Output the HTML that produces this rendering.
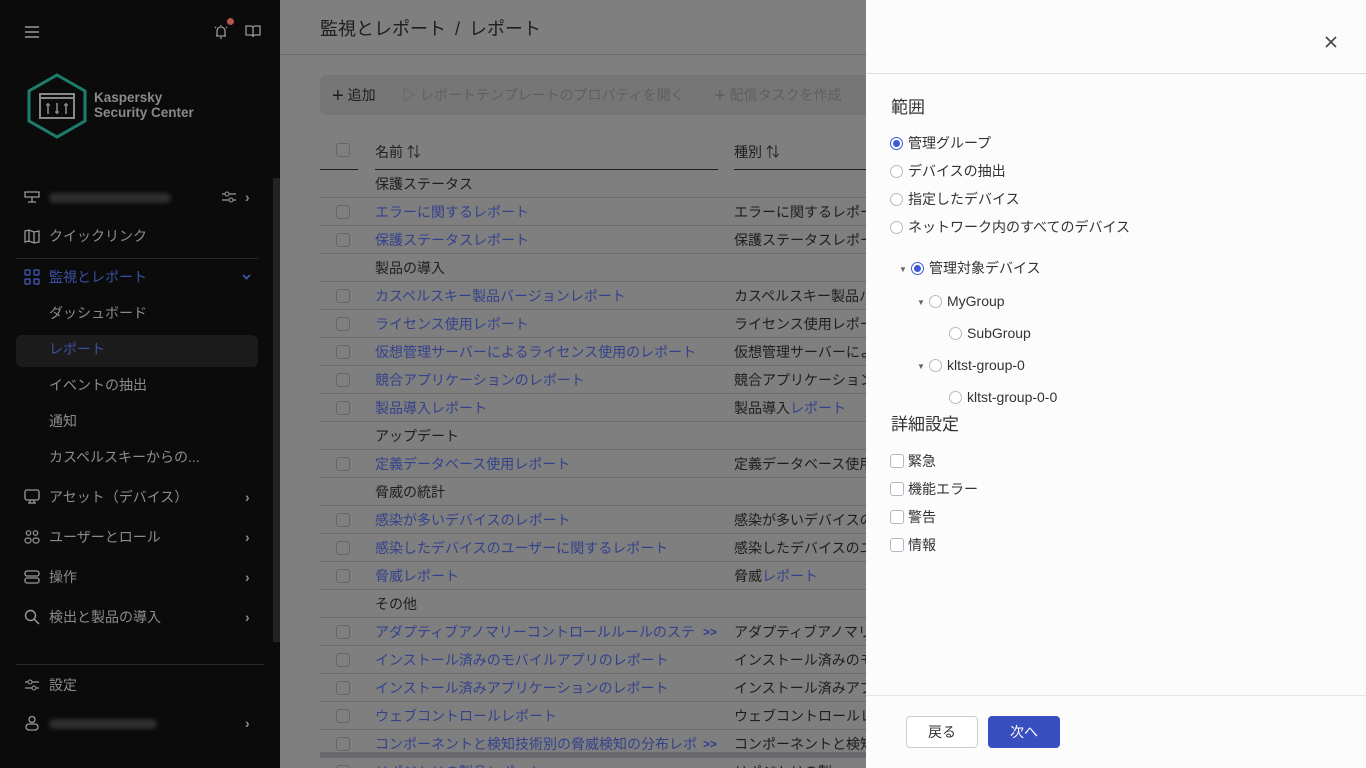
<!DOCTYPE html>
<html><head><meta charset="utf-8"><style>
*{margin:0;padding:0;box-sizing:border-box}
body{width:1366px;height:768px;overflow:hidden;position:relative;font-family:"Liberation Sans","Noto Sans CJK JP",sans-serif;background:#7f7f7f}
.sb{position:absolute;left:0;top:0;width:280px;height:768px;background:#0b0b0b;color:#8c8c8c;font-size:14px}
.it{position:absolute;left:0;width:280px;height:20px;line-height:20px}
.it .ic{position:absolute;left:24px;top:2px}
.it .tx{position:absolute;left:49px;top:0;white-space:nowrap}
.it .ch{position:absolute;left:245px;top:0;font-size:14px;color:#8c8c8c;font-weight:bold}
.blur{display:inline-block;height:10px;background:#2e2e2e;border-radius:5px;filter:blur(2px);vertical-align:middle}
.main{position:absolute;left:280px;top:0;width:586px;height:768px;background:#7f7f7f;overflow:hidden}
.row{position:absolute;left:40px;width:560px;height:28px;border-bottom:1px solid #6c6c6c;font-size:14px;line-height:28px;white-space:nowrap}
.row .cb{position:absolute;left:16px;top:7px;width:14px;height:14px;border:1px solid #666;border-radius:3px}
.row .n{position:absolute;left:55px;color:#34428c}
.row .g{position:absolute;left:55px;color:#1e1e1e}
.row .t{position:absolute;left:414px;color:#1e1e1e}
.row .m{position:absolute;left:383px;color:#2f3d8a;font-weight:bold;font-size:12px}
.panel{position:absolute;left:866px;top:0;width:500px;height:768px;background:#fcfcfc;color:#333}
.r{position:absolute;font-size:14px;line-height:18px;white-space:nowrap}
.rad{display:inline-block;width:13px;height:13px;border:1px solid #b8b8c4;border-radius:50%;vertical-align:-2px;margin-right:5px;position:relative;background:#fff}
.rad.on{border-color:#3d5bd6}
.rad.on:after{content:"";position:absolute;left:2px;top:2px;width:7px;height:7px;border-radius:50%;background:#3d5bd6}
.chk{display:inline-block;width:14px;height:14px;border:1px solid #b8b4c8;border-radius:3px;vertical-align:-2px;margin-right:4px;background:#fff}
.tri{display:inline-block;font-size:8px;color:#666;width:12px;vertical-align:1px}
</style></head><body>
<div class="sb">
 <svg style="position:absolute;left:25px;top:26px" width="14" height="12"><path d="M0 1h14M0 6h14M0 11h14" stroke="#999" stroke-width="1.5"/></svg>
 <svg style="position:absolute;left:213px;top:23px" width="16" height="16"><path d="M3 13h10M4 13V8a4 4 0 0 1 8 0v5M8 2v1M2 4l1 1M14 4l-1 1M7 15h2" stroke="#999" stroke-width="1.3" fill="none"/></svg>
 <div style="position:absolute;left:227px;top:18px;width:7px;height:7px;border-radius:50%;background:#b85450"></div>
 <svg style="position:absolute;left:245px;top:25px" width="16" height="13"><path d="M1 1h5a2 2 0 0 1 2 2v9a2 2 0 0 0-2-2H1zM15 1h-5a2 2 0 0 0-2 2v9a2 2 0 0 1 2-2h5z" stroke="#999" stroke-width="1.3" fill="none"/></svg>
 <svg style="position:absolute;left:26px;top:73px" width="62" height="66"><polygon points="31,2 59,18 59,48 31,64 3,48 3,18" fill="none" stroke="#1d7c6b" stroke-width="3"/><rect x="14" y="21" width="34" height="24" fill="none" stroke="#888" stroke-width="2"/><path d="M14 25h34" stroke="#888" stroke-width="2"/><path d="M22 30v11M31 30v11M40 30v11M20 32h4M29 39h4M38 32h4" stroke="#888" stroke-width="1.6"/></svg>
 <div style="position:absolute;left:94px;top:90px;font-size:13.5px;font-weight:bold;color:#8a8a8a;line-height:15px">Kaspersky<br>Security Center</div>
 <div style="position:absolute;left:273px;top:178px;width:7px;height:464px;background:#222"></div>
 <div class="it" style="top:187px"><svg class="ic" width="16" height="16"><path d="M1 3h14v5H1zM8 8v5M4 13h8" stroke="#999" stroke-width="1.3" fill="none"/></svg><span class="tx"><span class="blur" style="width:122px"></span></span><svg style="position:absolute;left:221px;top:3px" width="16" height="14"><path d="M1 4h14M1 10h14" stroke="#999" stroke-width="1.2"/><circle cx="6" cy="4" r="2" fill="#0b0b0b" stroke="#999"/><circle cx="10" cy="10" r="2" fill="#0b0b0b" stroke="#999"/></svg><span class="ch">›</span></div>
 <div class="it" style="top:226px"><svg class="ic" width="16" height="16"><path d="M1 3l4-1 5 2 5-1v11l-5 1-5-2-4 1zM5 2v12M10 4v11" stroke="#999" stroke-width="1.3" fill="none"/></svg><span class="tx">クイックリンク</span></div>
 <div style="position:absolute;left:16px;top:258px;width:242px;height:1px;background:#2a2a2a"></div>
 <div class="it" style="top:267px;color:#3a52a3"><svg class="ic" width="16" height="16"><rect x="1" y="1" width="5" height="5" rx="1" stroke="#3d56a8" fill="none" stroke-width="1.4"/><rect x="10" y="1" width="5" height="5" rx="1" stroke="#3d56a8" fill="none" stroke-width="1.4"/><rect x="1" y="10" width="5" height="5" rx="1" stroke="#3d56a8" fill="none" stroke-width="1.4"/><rect x="10" y="10" width="5" height="5" rx="1" stroke="#3d56a8" fill="none" stroke-width="1.4"/></svg><span class="tx">監視とレポート</span><svg style="position:absolute;left:242px;top:7px" width="9" height="6"><path d="M1 1l3.5 3.5L8 1" stroke="#3d56a8" stroke-width="1.8" fill="none"/></svg></div>
 <div class="it" style="top:303px"><span class="tx">ダッシュボード</span></div>
 <div style="position:absolute;left:16px;top:335px;width:242px;height:32px;background:#1b1b1b;border-radius:6px"></div>
 <div class="it" style="top:339px;color:#3a52a3"><span class="tx">レポート</span></div>
 <div class="it" style="top:375px"><span class="tx">イベントの抽出</span></div>
 <div class="it" style="top:411px"><span class="tx">通知</span></div>
 <div class="it" style="top:447px"><span class="tx">カスペルスキーからの...</span></div>
 <div class="it" style="top:487px"><svg class="ic" width="16" height="16"><rect x="1" y="1" width="14" height="10" rx="2" stroke="#999" fill="none" stroke-width="1.3"/><path d="M6 11v3M10 11v3M4 14h8" stroke="#999" stroke-width="1.3"/></svg><span class="tx">アセット（デバイス）</span><span class="ch">›</span></div>
 <div class="it" style="top:527px"><svg class="ic" width="16" height="16"><circle cx="4.5" cy="4" r="2.2" stroke="#999" fill="none" stroke-width="1.2"/><circle cx="11.5" cy="4" r="2.2" stroke="#999" fill="none" stroke-width="1.2"/><rect x="1" y="9" width="6" height="5" rx="2.5" stroke="#999" fill="none" stroke-width="1.2"/><rect x="9" y="9" width="6" height="5" rx="2.5" stroke="#999" fill="none" stroke-width="1.2"/></svg><span class="tx">ユーザーとロール</span><span class="ch">›</span></div>
 <div class="it" style="top:567px"><svg class="ic" width="16" height="16"><rect x="1" y="2" width="14" height="5" rx="2" stroke="#999" fill="none" stroke-width="1.3"/><rect x="1" y="9" width="14" height="5" rx="2" stroke="#999" fill="none" stroke-width="1.3"/></svg><span class="tx">操作</span><span class="ch">›</span></div>
 <div class="it" style="top:607px"><svg class="ic" width="16" height="16"><circle cx="6.5" cy="6.5" r="5" stroke="#999" fill="none" stroke-width="1.4"/><path d="M10 10l5 5" stroke="#999" stroke-width="1.4"/></svg><span class="tx">検出と製品の導入</span><span class="ch">›</span></div>
 <div style="position:absolute;left:16px;top:664px;width:248px;height:1px;background:#2a2a2a"></div>
 <div class="it" style="top:675px"><svg class="ic" width="16" height="16"><path d="M1 5h14M1 11h14" stroke="#999" stroke-width="1.2"/><circle cx="6" cy="5" r="2" fill="#0b0b0b" stroke="#999"/><circle cx="10" cy="11" r="2" fill="#0b0b0b" stroke="#999"/></svg><span class="tx">設定</span></div>
 <div class="it" style="top:713px"><svg class="ic" width="16" height="16"><circle cx="8" cy="4.5" r="3" stroke="#999" fill="none" stroke-width="1.3"/><rect x="2" y="9" width="12" height="6" rx="3" stroke="#999" fill="none" stroke-width="1.3"/></svg><span class="tx"><span class="blur" style="width:108px"></span></span><span class="ch">›</span></div>
</div>
<div class="main">
 <div style="position:absolute;left:40px;top:15px;font-size:18px;color:#1e1e1e">監視とレポート <b style="font-weight:normal;margin:0 4px">/</b> レポート</div>
 <div style="position:absolute;left:0;top:54px;width:586px;height:1px;background:#6c6c6c"></div>
 <div style="position:absolute;left:40px;top:75px;width:580px;height:40px;background:#767676;border-radius:6px;font-size:14px;line-height:40px;white-space:nowrap">
  <span style="position:absolute;left:12px;color:#1e1e1e"><span style="font-size:20px;vertical-align:-2px">+</span> 追加</span>
  <span style="position:absolute;left:82px;color:#5f5f5f">▷ レポートテンプレートのプロパティを開く</span>
  <span style="position:absolute;left:394px;color:#5f5f5f"><span style="font-size:20px;vertical-align:-2px">+</span> 配信タスクを作成</span>
 </div>
 <div style="position:absolute;left:40px;top:140px;width:560px;height:30px;font-size:14px;color:#1e1e1e">
  <div style="position:absolute;left:16px;top:3px;width:14px;height:14px;border:1px solid #666;border-radius:3px"></div>
  <span style="position:absolute;left:55px;top:2px">名前 ⇅</span>
  <span style="position:absolute;left:414px;top:2px">種別 ⇅</span>
  <div style="position:absolute;left:0;top:29px;width:38px;height:1px;background:#1e1e1e"></div>
  <div style="position:absolute;left:55px;top:29px;width:343px;height:1px;background:#1e1e1e"></div>
  <div style="position:absolute;left:414px;top:29px;width:150px;height:1px;background:#1e1e1e"></div>
 </div>
 <div class="row" style="top:170px"><span class="g">保護ステータス</span></div>
 <div class="row" style="top:198px"><i class="cb"></i><span class="n">エラーに関するレポート</span><span class="t">エラーに関するレポート</span></div>
 <div class="row" style="top:226px"><i class="cb"></i><span class="n">保護ステータスレポート</span><span class="t">保護ステータスレポート</span></div>
 <div class="row" style="top:254px"><span class="g">製品の導入</span></div>
 <div class="row" style="top:282px"><i class="cb"></i><span class="n">カスペルスキー製品バージョンレポート</span><span class="t">カスペルスキー製品バージョン</span></div>
 <div class="row" style="top:310px"><i class="cb"></i><span class="n">ライセンス使用レポート</span><span class="t">ライセンス使用レポート</span></div>
 <div class="row" style="top:338px"><i class="cb"></i><span class="n">仮想管理サーバーによるライセンス使用のレポート</span><span class="t">仮想管理サーバーによる</span></div>
 <div class="row" style="top:366px"><i class="cb"></i><span class="n">競合アプリケーションのレポート</span><span class="t">競合アプリケーションの</span></div>
 <div class="row" style="top:394px"><i class="cb"></i><span class="n">製品導入レポート</span><span class="t">製品導入<span style="color:#34428c">レポート</span></span></div>
 <div class="row" style="top:422px"><span class="g">アップデート</span></div>
 <div class="row" style="top:450px"><i class="cb"></i><span class="n">定義データベース使用レポート</span><span class="t">定義データベース使用レ</span></div>
 <div class="row" style="top:478px"><span class="g">脅威の統計</span></div>
 <div class="row" style="top:506px"><i class="cb"></i><span class="n">感染が多いデバイスのレポート</span><span class="t">感染が多いデバイスの</span></div>
 <div class="row" style="top:534px"><i class="cb"></i><span class="n">感染したデバイスのユーザーに関するレポート</span><span class="t">感染したデバイスのユ</span></div>
 <div class="row" style="top:562px"><i class="cb"></i><span class="n">脅威レポート</span><span class="t">脅威<span style="color:#34428c">レポート</span></span></div>
 <div class="row" style="top:590px"><span class="g">その他</span></div>
 <div class="row" style="top:618px"><i class="cb"></i><span class="n">アダプティブアノマリーコントロールルールのステ</span><span class="m">&gt;&gt;</span><span class="t">アダプティブアノマリ</span></div>
 <div class="row" style="top:646px"><i class="cb"></i><span class="n">インストール済みのモバイルアプリのレポート</span><span class="t">インストール済みのモ</span></div>
 <div class="row" style="top:674px"><i class="cb"></i><span class="n">インストール済みアプリケーションのレポート</span><span class="t">インストール済みアプ</span></div>
 <div class="row" style="top:702px"><i class="cb"></i><span class="n">ウェブコントロールレポート</span><span class="t">ウェブコントロールレ</span></div>
 <div class="row" style="top:730px"><i class="cb"></i><span class="n">コンポーネントと検知技術別の脅威検知の分布レポ</span><span class="m">&gt;&gt;</span><span class="t">コンポーネントと検知</span></div>
 <div class="row" style="top:758px"><i class="cb"></i><span class="n">リポジトリの製品レポート</span><span class="t">リポジトリの製</span></div>
 <div style="position:absolute;left:40px;top:752px;width:546px;height:6px;background:#6a6a6e"></div>
</div>
<div class="panel">
 <svg style="position:absolute;left:459px;top:36px" width="12" height="12"><path d="M1 1l10 10M11 1L1 11" stroke="#444" stroke-width="1.6"/></svg>
 <div style="position:absolute;left:0;top:73px;width:500px;height:1px;background:#dcdcdc"></div>
 <div class="r" style="left:25px;top:98px;font-size:17px;line-height:20px;color:#333">範囲</div>
 <div class="r" style="left:24px;top:134px"><i class="rad on"></i>管理グループ</div>
 <div class="r" style="left:24px;top:162px"><i class="rad"></i>デバイスの抽出</div>
 <div class="r" style="left:24px;top:190px"><i class="rad"></i>指定したデバイス</div>
 <div class="r" style="left:24px;top:218px"><i class="rad"></i>ネットワーク内のすべてのデバイス</div>
 <div class="r" style="left:33px;top:259px"><span class="tri">▼</span><i class="rad on"></i>管理対象デバイス</div>
 <div class="r" style="left:51px;top:292px"><span class="tri">▼</span><i class="rad"></i>MyGroup</div>
 <div class="r" style="left:83px;top:324px"><i class="rad"></i>SubGroup</div>
 <div class="r" style="left:51px;top:356px"><span class="tri">▼</span><i class="rad"></i>kltst-group-0</div>
 <div class="r" style="left:83px;top:388px"><i class="rad"></i>kltst-group-0-0</div>
 <div class="r" style="left:25px;top:415px;font-size:17px;line-height:20px">詳細設定</div>
 <div class="r" style="left:24px;top:452px"><i class="chk"></i>緊急</div>
 <div class="r" style="left:24px;top:480px"><i class="chk"></i>機能エラー</div>
 <div class="r" style="left:24px;top:508px"><i class="chk"></i>警告</div>
 <div class="r" style="left:24px;top:536px"><i class="chk"></i>情報</div>
 <div style="position:absolute;left:0;top:695px;width:500px;height:1px;background:#e6e6e6"></div>
 <div style="position:absolute;left:40px;top:716px;width:72px;height:32px;border:1px solid #ccc;border-radius:4px;background:#fff;font-size:14px;line-height:30px;text-align:center;color:#333">戻る</div>
 <div style="position:absolute;left:122px;top:716px;width:72px;height:32px;border-radius:4px;background:#3a4fbf;font-size:14px;line-height:32px;text-align:center;color:#fff">次へ</div>
</div>
</body></html>
